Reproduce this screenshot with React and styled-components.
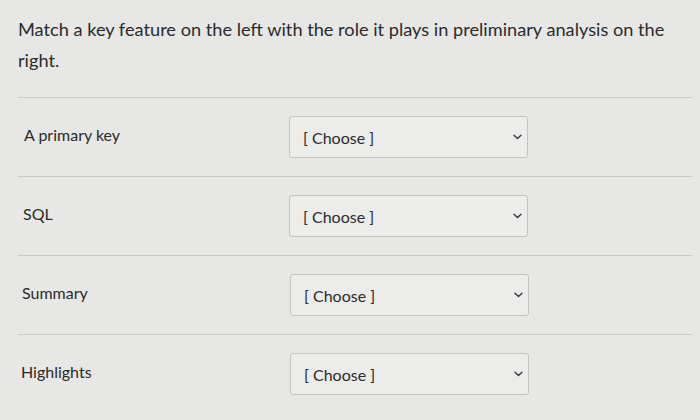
import React from "react";
import styled, { createGlobalStyle } from "styled-components";

const Global = createGlobalStyle`
  html, body { margin: 0; padding: 0; background: #e7e7e5; }
  body { font-family: Lato, "Open Sans", sans-serif; color: #2e2e2e; }
`;

const Page = styled.div`
  width: 700px;
  height: 420px;
  box-sizing: border-box;
  padding: 14px 8px 0 18px;
  overflow: hidden;
  background: #e7e7e5;
`;

const Question = styled.p`
  margin: 0 0 21px 0;
  font-size: 18.2px;
  line-height: 31px;
  color: #2b2b2b;
  max-width: 665px;
`;

const Row = styled.div`
  display: flex;
  align-items: center;
  border-top: 1px solid #c9c9c7;
  padding: 18px 0 18px 0;
`;

const Label = styled.div`
  box-sizing: border-box;
  width: ${(p) => 271 + p.$shift}px;
  padding-left: ${(p) => p.$indent}px;
  margin-bottom: 6px;
  font-size: 16px;
  color: #2b2b2b;
`;

const SelectBox = styled.div`
  box-sizing: border-box;
  width: 239px;
  height: 42px;
  display: flex;
  align-items: center;
  justify-content: space-between;
  padding: 0 5px 0 13px;
  background: #ececea;
  border: 1px solid #c3c3c1;
  border-radius: 3px;
  font-size: 16px;
  color: #2b2b2b;
`;

const Chevron = () => (
  <svg width="9" height="6" viewBox="0 0 9 6" fill="none">
    <path d="M1 1.2 L4.5 4.6 L8 1.2" stroke="#3a3a3a" strokeWidth="1.4" strokeLinecap="round" strokeLinejoin="round" />
  </svg>
);

const rows = [
  { label: "A primary key", indent: 6, shift: 0 },
  { label: "SQL", indent: 5, shift: 0 },
  { label: "Summary", indent: 4, shift: 1 },
  { label: "Highlights", indent: 3, shift: 1 },
];

export default function App() {
  return (
    <Page>
      <Global />
      <Question>
        Match a key feature on the left with the role it plays in preliminary analysis on the right.
      </Question>
      {rows.map((r) => (
        <Row key={r.label}>
          <Label $indent={r.indent} $shift={r.shift}>{r.label}</Label>
          <SelectBox>
            <span>[ Choose ]</span>
            <Chevron />
          </SelectBox>
        </Row>
      ))}
    </Page>
  );
}
